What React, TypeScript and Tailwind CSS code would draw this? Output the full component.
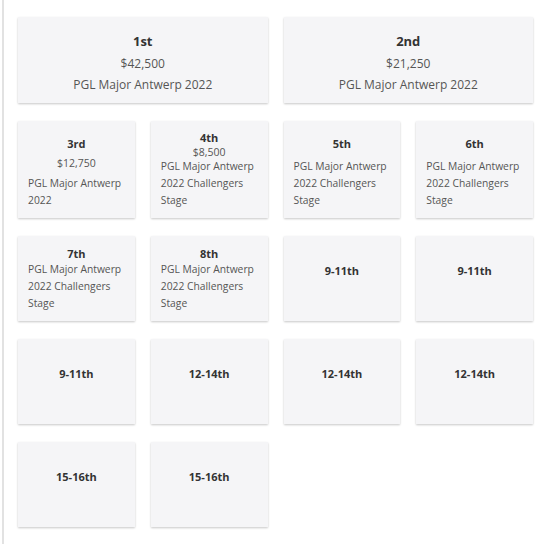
import React from "react";

const card =
  "bg-[#f5f5f7] shadow-[0_1px_2px_rgba(0,0,0,0.22)] text-center text-[#555]";

function Big({ place, prize, t }: { place: string; prize: string; t: string }) {
  return (
    <div className={`${card} col-span-2 flex flex-col items-center pt-[14px] leading-[21.5px]`}>
      <div className="font-bold text-[13px] text-[#333]">{place}</div>
      <div className="text-[12px]">{prize}</div>
      <div className="text-[12px]">{t}</div>
    </div>
  );
}

function Head({ children, className = "" }: { children: React.ReactNode; className?: string }) {
  return <div className={`font-bold text-[11px] text-[#333] ${className}`}>{children}</div>;
}

function Tour({ children, className = "" }: { children: React.ReactNode; className?: string }) {
  return <div className={`self-stretch text-left text-[10.3px] leading-[17px] ${className}`}>{children}</div>;
}

function Only({ place }: { place: string }) {
  return (
    <div className={`${card} flex flex-col items-center pt-[26px]`}>
      <Head className="leading-[17px]">{place}</Head>
    </div>
  );
}

const CH = "PGL Major Antwerp 2022 Challengers Stage";

export default function App() {
  return (
    <div className="min-h-[544px] bg-white" style={{ fontFamily: '"Open Sans", sans-serif' }}>
      <div className="ml-[2px] border-l-2 border-[#e2e2e2] min-h-[544px] pl-[14px] pr-[17px] pt-[17px] pb-[16px]">
        <div className="grid grid-cols-4 gap-x-[16px] gap-y-[18px] grid-rows-[86px_97px_85px_85px_85px]">
          <Big place="1st" prize="$42,500" t="PGL Major Antwerp 2022" />
          <Big place="2nd" prize="$21,250" t="PGL Major Antwerp 2022" />

          <div className={`${card} flex flex-col items-center px-[10px] pt-[13.5px]`}>
            <Head className="leading-[17px]">3rd</Head>
            <div className="mt-[3px] text-[10.5px] leading-[17px]">$12,750</div>
            <Tour className="mt-[3px]">PGL Major Antwerp 2022</Tour>
          </div>
          <div className={`${card} flex flex-col items-center px-[10px] pt-[9px]`}>
            <Head className="leading-[15px]">4th</Head>
            <div className="text-[10.5px] leading-[14px]">$8,500</div>
            <Tour className="-mt-[1px]">{CH}</Tour>
          </div>
          <div className={`${card} flex flex-col items-center px-[10px] pt-[13.5px]`}>
            <Head className="leading-[17px]">5th</Head>
            <Tour className="mt-[6px]">{CH}</Tour>
          </div>
          <div className={`${card} flex flex-col items-center px-[10px] pt-[13.5px]`}>
            <Head className="leading-[17px]">6th</Head>
            <Tour className="mt-[6px]">{CH}</Tour>
          </div>

          <div className={`${card} flex flex-col items-center px-[10px] pt-[11px]`}>
            <Head className="leading-[14px]">7th</Head>
            <Tour>{CH}</Tour>
          </div>
          <div className={`${card} flex flex-col items-center px-[10px] pt-[11px]`}>
            <Head className="leading-[14px]">8th</Head>
            <Tour>{CH}</Tour>
          </div>
          <Only place="9-11th" />
          <Only place="9-11th" />

          <Only place="9-11th" />
          <Only place="12-14th" />
          <Only place="12-14th" />
          <Only place="12-14th" />

          <Only place="15-16th" />
          <Only place="15-16th" />
        </div>
      </div>
    </div>
  );
}
